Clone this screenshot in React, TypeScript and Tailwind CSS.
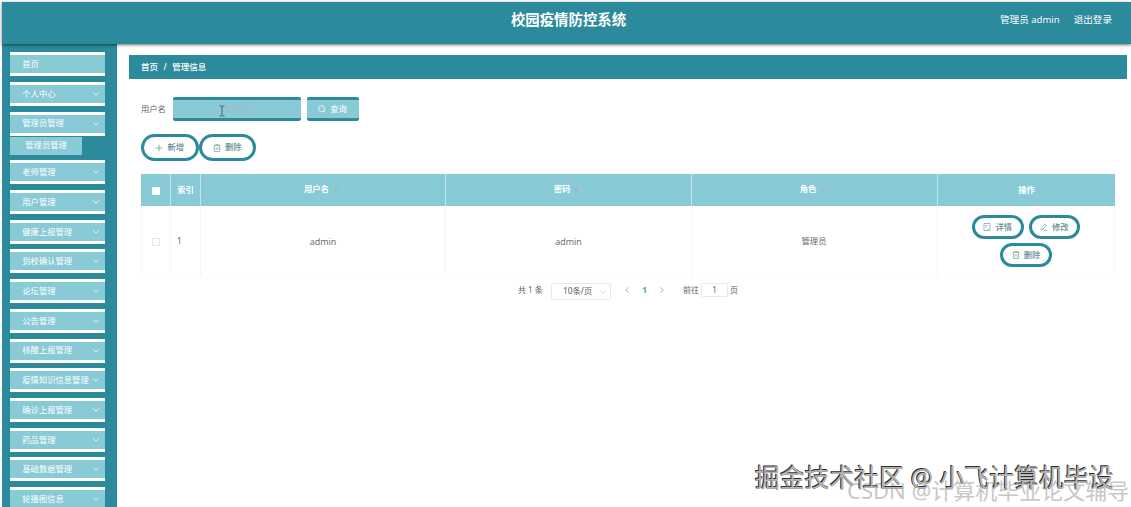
import type { ReactNode } from 'react';

const menu: string[] = [
  '老师管理',
  '用户管理',
  '健康上报管理',
  '到校确认管理',
  '论坛管理',
  '公告管理',
  '核酸上报管理',
  '疫情知识信息管理',
  '确诊上报管理',
  '药品管理',
  '基础数据管理',
  '轮播图信息',
];

function Chevron({ className }: { className: string }) {
  return (
    <svg viewBox="0 0 8 8" className={className} fill="none" stroke="currentColor" strokeWidth="0.8">
      <path d="M1.3 2.6 4 5.2 6.7 2.6" />
    </svg>
  );
}

function MenuItem({ label, arrow = true }: { label: string; arrow?: boolean }) {
  return (
    <div className="flex h-[24px] w-[95px] shrink-0 items-center justify-between border-y-[3px] border-white bg-[#88cad6] pl-[12px] pr-[5px] text-[8.3px] text-white">
      <span className="whitespace-nowrap">{label}</span>
      {arrow && <Chevron className="size-[8px] shrink-0" />}
    </div>
  );
}

function DocIcon() {
  return (
    <svg viewBox="0 0 8 8" className="size-[8px]" fill="none" stroke="currentColor" strokeWidth="0.6">
      <path d="M1 .5h6v7H1zM2.5 2.5h2M2.5 4h1.5M4.2 6h1.6" />
    </svg>
  );
}

function TrashIcon() {
  return (
    <svg viewBox="0 0 8 8" className="size-[8px]" fill="none" stroke="currentColor" strokeWidth="0.6">
      <path d="M.7 1.5h6.6M2.7 1.5V.5h2.6v1M1.3 1.5v6h5.4v-6M3.2 3.2v2.6M4.8 3.2v2.6" />
    </svg>
  );
}

function EditIcon() {
  return (
    <svg viewBox="0 0 8 8" className="size-[8px]" fill="none" stroke="currentColor" strokeWidth="0.6">
      <path d="M1.3 5.2 4.9.8l1.6 1.3L3 6.4l-1.9.6zM4 7.4h3.5" />
    </svg>
  );
}

function PlusIcon() {
  return (
    <svg viewBox="0 0 8 8" className="size-[8px]" fill="none" stroke="currentColor" strokeWidth="0.7">
      <path d="M4 .7v6.6M.7 4h6.6" />
    </svg>
  );
}

function Pill({ icon, label, small = false }: { icon: ReactNode; label: string; small?: boolean }) {
  return (
    <button
      className={`flex shrink-0 items-center justify-center gap-[4px] rounded-full border-[3px] border-[#2b8a9b] bg-white text-[8.3px] text-[#5f8b93] ${
        small ? 'h-[24px] w-[51.5px]' : 'h-[27px] w-[57.5px]'
      }`}
    >
      {icon}
      <span className="font-medium">{label}</span>
    </button>
  );
}

function SortHead({ label }: { label: string }) {
  return (
    <div className="flex items-center justify-center gap-[5px] border-r border-[#c3e4ea] pb-[1px] pr-[4px]">
      <span>{label}</span>
      <svg viewBox="0 0 4 8" className="h-[8px] w-[4px] shrink-0 fill-[#bba9b8]">
        <path d="M2 1 3.6 3.3H.4zM2 7 .4 4.7h3.2z" />
      </svg>
    </div>
  );
}

export default function App() {
  return (
    <div className="relative h-[507px] w-[1131px] overflow-hidden bg-white pl-[2px] pt-[2px] font-['Noto_Sans','Noto_Sans_CJK_SC',sans-serif] leading-none">
      <header className="relative flex h-[41.5px] items-start bg-[#2b8a9b] text-white shadow-[0_1px_3px_rgba(0,0,0,0.55)]">
        <div className="w-[350px]" />
        <h1 className="flex-1 pl-[4px] pt-[11px] text-center text-[14.4px] font-bold">校园疫情防控系统</h1>
        <div className="flex w-[350px] justify-end gap-[14px] pr-[19px] pt-[13px] text-[9.6px]">
          <span className="font-['Open_Sans','Noto_Sans_CJK_SC',sans-serif]">管理员 admin</span>
          <span>退出登录</span>
        </div>
      </header>

      <div className="flex h-[463.5px]">
        <aside className="flex w-[115px] shrink-0 flex-col gap-[5.73px] overflow-hidden bg-[#2b8a9b] pl-[8.3px] pt-[8.6px]">
          <MenuItem label="首页" arrow={false} />
          <MenuItem label="个人中心" />
          <div className="flex shrink-0 flex-col">
            <MenuItem label="管理员管理" />
            <div className="mt-[1px] flex h-[18px] w-[71.5px] items-center bg-[#88cad6] pl-[15px] text-[8.3px] text-white">
              管理员管理
            </div>
          </div>
          {menu.map((label) => (
            <MenuItem key={label} label={label} />
          ))}
        </aside>

        <main className="flex flex-1 flex-col pl-[12px] pr-[4px] pt-[11.5px]">
          <nav className="flex h-[24px] items-center gap-[5.5px] bg-[#2b8a9b] pl-[12px] text-[8.5px] font-medium text-white">
            <span>首页</span>
            <span>/</span>
            <span>管理信息</span>
          </nav>

          <section className="flex flex-col pl-[12px] pr-[12px] pt-[18px] text-[8.3px] text-[#606266]">
            <div className="flex items-center">
              <label className="w-[32px]">用户名</label>
              <div className="flex h-[24px] w-[128px] items-center justify-center rounded-[2px] border-y-[3px] border-[#2b8a9b] bg-[#88cad6]">
                <svg viewBox="0 0 8 12" className="ml-[2px] mt-[3px] h-[12px] w-[8px]" fill="none" stroke="#555f66" strokeWidth="1">
                  <path d="M1.5 1h2l.5.5.5-.5h2M4 1.5v9M1.5 11h2l.5-.5.5.5h2" />
                </svg>
                <span className="mr-[8px] text-[#a9b8c5]">用户名</span>
              </div>
              <button className="ml-[5.5px] flex h-[24px] w-[52px] items-center justify-center gap-[4px] rounded-[2px] border-y-[3px] border-[#2b8a9b] bg-[#88cad6] text-white">
                <svg viewBox="0 0 8 8" className="size-[8px]" fill="none" stroke="currentColor" strokeWidth="0.8">
                  <circle cx="3.7" cy="3.7" r="3" />
                  <path d="M5.9 5.9 7.6 7.6" />
                </svg>
                <span>查询</span>
              </button>
            </div>

            <div className="mt-[13px] flex">
              <Pill icon={<PlusIcon />} label="新增" />
              <Pill icon={<TrashIcon />} label="删除" />
            </div>

            <div className="mt-[13px] w-[974px] shrink-0">
              <div className="grid h-[32px] grid-cols-[30px_30px_245px_246px_246px_177px] bg-[#88cad6] font-bold text-white">
                <div className="flex items-center justify-center border-r border-[#c3e4ea]">
                  <span className="mt-[1px] size-[8px] rounded-[1px] bg-white" />
                </div>
                <div className="flex items-center justify-center border-r border-[#c3e4ea]">索引</div>
                <SortHead label="用户名" />
                <SortHead label="密码" />
                <SortHead label="角色" />
                <div className="flex items-center justify-center">操作</div>
              </div>
              <div className="grid h-[71px] grid-cols-[30px_30px_245px_246px_246px_177px] border-b border-[#fafafa] text-[#666]">
                <div className="flex items-center justify-center border-x border-[#f6f7f8]">
                  <span className="mr-[1px] mt-[1px] size-[8px] rounded-[1px] border border-[#e0e3e8]" />
                </div>
                <div className="flex items-center border-r border-[#f3f5f6] pl-[6px] pt-[1px]">1</div>
                <div className="flex items-center justify-center border-r border-[#f3f5f6] pt-[1px] font-['Open_Sans',sans-serif] text-[9px]">admin</div>
                <div className="flex items-center justify-center border-r border-[#f3f5f6] pt-[1px] font-['Open_Sans',sans-serif] text-[9px]">admin</div>
                <div className="flex items-center justify-center border-r border-[#f3f5f6] pr-[1px] pt-[1px]">管理员</div>
                <div className="flex flex-wrap content-center items-center justify-center gap-x-[5px] gap-y-[4px] border-r border-[#f8f8f8] pl-[29px] pr-[29px]">
                  <Pill small icon={<DocIcon />} label="详情" />
                  <Pill small icon={<EditIcon />} label="修改" />
                  <Pill small icon={<TrashIcon />} label="删除" />
                </div>
              </div>
            </div>

            <div className="mt-[4px] flex h-[18px] items-center pl-[377px] text-[8px]">
              <span className="w-[33px] whitespace-nowrap">共 1 条</span>
              <div className="mt-[3px] flex h-[17px] w-[60px] shrink-0 items-center justify-between rounded-[2px] border border-[#e7e9ed] pl-[11px] pr-[3px]">
                <span className="text-[8.3px]">10条/页</span>
                <Chevron className="size-[8px] text-[#c4c8cf]" />
              </div>
              <Chevron className="ml-[12px] size-[8px] rotate-90 text-[#999]" />
              <span className="w-[27px] text-center text-[8.3px] font-bold text-[#2fae8b]">1</span>
              <Chevron className="size-[8px] -rotate-90 text-[#999]" />
              <span className="ml-[17px] w-[18px] whitespace-nowrap">前往</span>
              <span className="flex h-[14px] w-[27px] items-center justify-center rounded-[2px] border border-[#e7e9ed]">1</span>
              <span className="ml-[2px]">页</span>
            </div>
          </section>
        </main>
      </div>

      <div className="absolute left-[847px] top-[479px] whitespace-nowrap text-[22px] leading-none text-[#c8c8c8]">
        CSDN @计算机毕业论文辅导
      </div>
      <div className="absolute left-[755px] top-[465px] whitespace-nowrap text-[24.9px] leading-none text-[#b4b4b4] [text-shadow:-1px_-1px_0_#2e2e2e,-0.5px_-0.5px_0_#444]">
        掘金技术社区 @ 小飞计算机毕设
      </div>
    </div>
  );
}
